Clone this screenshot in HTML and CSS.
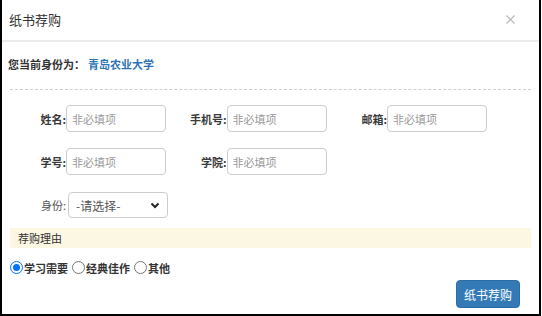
FILE: index.html
```html
<!DOCTYPE html>
<html lang="zh">
<head>
<meta charset="utf-8">
<link rel="stylesheet" href="styles.css">
</head>
<body>
<div class="frame">
  <div class="header">
    <span class="title">纸书荐购</span>
    <svg class="close" width="9" height="9" viewBox="0 0 9 9"><path d="M0.5 0.5 L8.5 8.5 M8.5 0.5 L0.5 8.5" stroke="#bdbdbd" stroke-width="1.3"/></svg>
  </div>
  <div class="content">
    <div class="identity"><b>您当前身份为：</b><span class="school">青岛农业大学</span></div>
    <div class="dash"></div>
    <div class="grid">
      <div class="field"><label>姓名:</label><input class="inp" placeholder="非必填项"></div>
      <div class="field"><label>手机号:</label><input class="inp" placeholder="非必填项"></div>
      <div class="field"><label>邮箱:</label><input class="inp" placeholder="非必填项"></div>
      <div class="field"><label>学号:</label><input class="inp" placeholder="非必填项"></div>
      <div class="field"><label>学院:</label><input class="inp" placeholder="非必填项"></div>
    </div>
    <div class="role">
      <span class="role-label">身份:</span>
      <div class="select"><span>-请选择-</span>
        <svg width="10" height="7" viewBox="0 0 10 7"><path d="M1.5 1.5 L5 5 L8.5 1.5" fill="none" stroke="#222" stroke-width="2"/></svg>
      </div>
    </div>
    <div class="reason">荐购理由</div>
    <div class="radios">
      <span class="radio on"></span><span class="rtext">学习需要</span>
      <span class="radio"></span><span class="rtext">经典佳作</span>
      <span class="radio"></span><span class="rtext">其他</span>
    </div>
    <div class="actions"><button class="btn">纸书荐购</button></div>
  </div>
</div>
</body>
</html>
```

FILE: styles.css
```css
* { box-sizing: border-box; }
body {
  margin: 0;
  font-family: "Noto Sans CJK SC", "Noto Sans", sans-serif;
  color: #333;
  background: #fff;
}
.frame {
  width: 541px;
  height: 316px;
  border-left: 2px solid #000;
  border-right: 2px solid #000;
  border-bottom: 2px solid #000;
  display: flex;
  flex-direction: column;
}
.header {
  height: 42px;
  border-bottom: 2px solid #ececec;
  display: flex;
  align-items: center;
  justify-content: space-between;
  padding: 0 24px 2px 7px;
}
.title { font-size: 13px; color: #333; }
.close { display: block; }
.content { padding: 0 6px 0 8px; display: flex; flex-direction: column; }
.identity {
  margin-top: 14px;
  font-size: 11px;
  height: 16px;
  line-height: 16px;
  display: flex;
  margin-left: -2px;
}
.identity b { color: #333; font-weight: 700; }
.school { color: #2e75b6; font-weight: 700; margin-left: 3px; }
.dash {
  margin-top: 17px;
  border-top: 1px dashed #cfcfcf;
  margin-right: 2px;
}
.grid {
  margin-top: 15px;
  margin-left: -4px;
  display: grid;
  grid-template-columns: repeat(3, 160.5px);
  row-gap: 16px;
}
.field { display: flex; align-items: center; }
.field label {
  width: 60px;
  text-align: right;
  font-size: 11px;
  font-weight: 700;
  color: #3a3a3a;
}
.inp {
  width: 100px;
  height: 27px;
  border: 1px solid #ccc;
  border-radius: 4px;
  padding: 0 5px;
  font-size: 11px;
  font-family: inherit;
  outline: none;
}
.inp::placeholder { color: #999; }
.role { margin-top: 17px; display: flex; align-items: center; }
.role-label { width: 56px; text-align: right; font-size: 11px; color: #555; }
.select {
  margin-left: 2px;
  width: 100px;
  height: 26px;
  border: 1px solid #ccc;
  border-radius: 4px;
  display: flex;
  align-items: center;
  justify-content: space-between;
  padding: 0 7px 0 7px;
  font-size: 12px;
  color: #555;
}
.reason {
  margin-top: 10px;
  margin-right: 2px;
  height: 20px;
  background: #fcf7e3;
  font-size: 11px;
  line-height: 20px;
  padding-left: 8px;
  color: #333;
}
.radios {
  margin-top: 12px;
  display: flex;
  align-items: center;
  height: 15px;
}
.radio {
  width: 13px;
  height: 13px;
  border: 1px solid #767676;
  border-radius: 50%;
  flex: none;
}
.radio.on { border: 1px solid #0075ff; position: relative; }
.radio.on::after {
  content: "";
  position: absolute;
  left: 2px; top: 2px;
  width: 7px; height: 7px;
  border-radius: 50%;
  background: #0075ff;
}
.rtext { font-size: 11px; font-weight: 700; color: #333; margin: 0 4px 0 1px; }
.actions { margin-top: 5px; display: flex; justify-content: flex-end; padding-right: 13px; }
.btn {
  width: 64px;
  height: 28px;
  background: #337ab7;
  border: 1px solid #2e6da4;
  border-radius: 4px;
  color: #fff;
  font-size: 12px;
  font-family: inherit;
  padding: 0;
}
```
